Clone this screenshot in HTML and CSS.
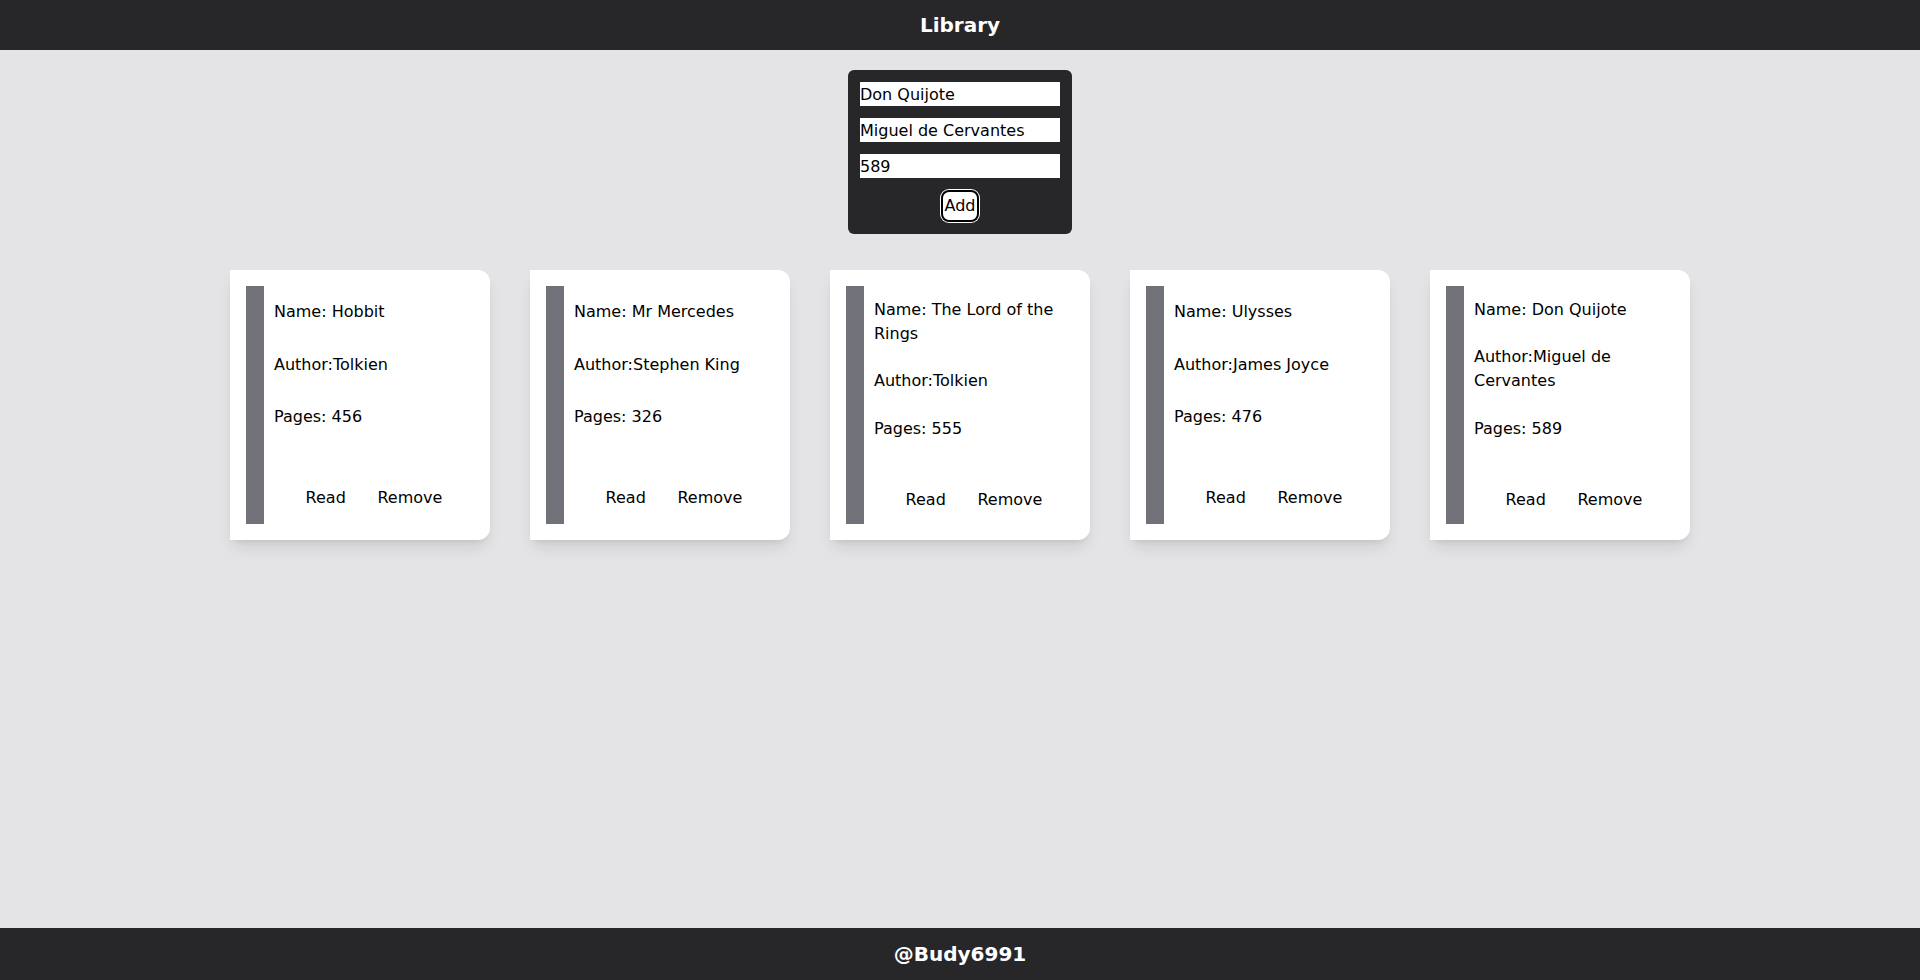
FILE: index.html
```html
<!DOCTYPE html>
<html lang="en">
<head>
<meta charset="utf-8">
<title>Library</title>
<link rel="stylesheet" href="styles.css">
</head>
<body>
<div class="page">
  <header class="topbar"><h1 class="title">Library</h1></header>
  <main class="main">
    <form class="add-form">
      <input class="field" type="text" value="Don Quijote">
      <input class="field" type="text" value="Miguel de Cervantes">
      <input class="field" type="text" value="589">
      <button class="add-btn" type="button">Add</button>
    </form>
    <section class="cards">
      <article class="card">
        <div class="card-bar"></div>
        <div class="card-body">
          <p class="info">Name: Hobbit</p>
          <p class="info">Author:Tolkien</p>
          <p class="info">Pages: 456</p>
          <p class="status"></p>
          <div class="actions"><button class="act" type="button">Read</button><button class="act" type="button">Remove</button></div>
        </div>
      </article>
      <article class="card">
        <div class="card-bar"></div>
        <div class="card-body">
          <p class="info">Name: Mr Mercedes</p>
          <p class="info">Author:Stephen King</p>
          <p class="info">Pages: 326</p>
          <p class="status"></p>
          <div class="actions"><button class="act" type="button">Read</button><button class="act" type="button">Remove</button></div>
        </div>
      </article>
      <article class="card">
        <div class="card-bar"></div>
        <div class="card-body">
          <p class="info">Name: The Lord of the Rings</p>
          <p class="info">Author:Tolkien</p>
          <p class="info">Pages: 555</p>
          <p class="status"></p>
          <div class="actions"><button class="act" type="button">Read</button><button class="act" type="button">Remove</button></div>
        </div>
      </article>
      <article class="card">
        <div class="card-bar"></div>
        <div class="card-body">
          <p class="info">Name: Ulysses</p>
          <p class="info">Author:James Joyce</p>
          <p class="info">Pages: 476</p>
          <p class="status"></p>
          <div class="actions"><button class="act" type="button">Read</button><button class="act" type="button">Remove</button></div>
        </div>
      </article>
      <article class="card">
        <div class="card-bar"></div>
        <div class="card-body">
          <p class="info">Name: Don Quijote</p>
          <p class="info">Author:Miguel de Cervantes</p>
          <p class="info">Pages: 589</p>
          <p class="status"></p>
          <div class="actions"><button class="act" type="button">Read</button><button class="act" type="button">Remove</button></div>
        </div>
      </article>
    </section>
  </main>
  <footer class="footer"><span class="credit">@Budy6991</span></footer>
</div>
</body>
</html>
```

FILE: styles.css
```css
* { box-sizing: border-box; }
html, body { margin: 0; padding: 0; height: 100%; overflow: hidden; }
body {
  font-family: "DejaVu Sans", sans-serif;
  font-size: 16px;
  line-height: 24px;
  background: #e4e4e7;
  color: #000;
}
.page {
  height: 100vh;
  display: flex;
  flex-direction: column;
}
.topbar {
  height: 50px;
  flex: none;
  background: #27272a;
  display: flex;
  align-items: center;
  justify-content: center;
}
.title {
  margin: 0;
  color: #fff;
  font-size: 20px;
  line-height: 28px;
  font-weight: bold;
}
.main {
  flex: 1;
  display: flex;
  flex-direction: column;
  align-items: center;
}
.add-form {
  margin-top: 20px;
  width: 224px;
  padding: 12px;
  background: #27272a;
  border-radius: 6px;
  display: flex;
  flex-direction: column;
  align-items: center;
  gap: 12px;
}
.field {
  width: 200px;
  height: 24px;
  border: none;
  padding: 0;
  margin: 0;
  background: #fff;
  color: #000;
  font-family: "DejaVu Sans", sans-serif;
  font-size: 16px;
  outline: none;
}
.add-btn {
  height: 32px;
  padding: 2px 2px;
  margin: 0;
  background: #fff;
  color: #000;
  border: 2px solid #000;
  border-radius: 8px;
  box-shadow: 0 0 0 1px #fff;
  font-family: "DejaVu Sans", sans-serif;
  font-size: 16px;
  line-height: 24px;
}
.cards {
  margin-top: 36px;
  display: flex;
  gap: 40px;
  justify-content: center;
}
.card {
  width: 260px;
  height: 270px;
  padding: 16px;
  background: #fff;
  border-radius: 0 12px 12px 0;
  box-shadow: 0 10px 15px -3px rgba(0,0,0,0.1), 0 4px 6px -4px rgba(0,0,0,0.1);
  display: flex;
  gap: 10px;
}
.card-bar {
  width: 18px;
  flex: none;
  background: #71717a;
}
.card-body {
  flex: 1;
  display: flex;
  flex-direction: column;
  justify-content: space-around;
}
.info {
  margin: 0;
}
.status {
  margin: 0;
  height: 0;
}
.actions {
  height: 24px;
  display: flex;
  align-items: center;
  justify-content: space-evenly;
}
.act {
  background: transparent;
  border: none;
  padding: 0;
  margin: 0;
  color: #000;
  font-family: "DejaVu Sans", sans-serif;
  font-size: 16px;
  line-height: 24px;
}
.footer {
  height: 52px;
  flex: none;
  background: #27272a;
  display: flex;
  align-items: center;
  justify-content: center;
}
.credit {
  color: #fff;
  font-size: 20px;
  line-height: 28px;
  font-weight: bold;
}
```
